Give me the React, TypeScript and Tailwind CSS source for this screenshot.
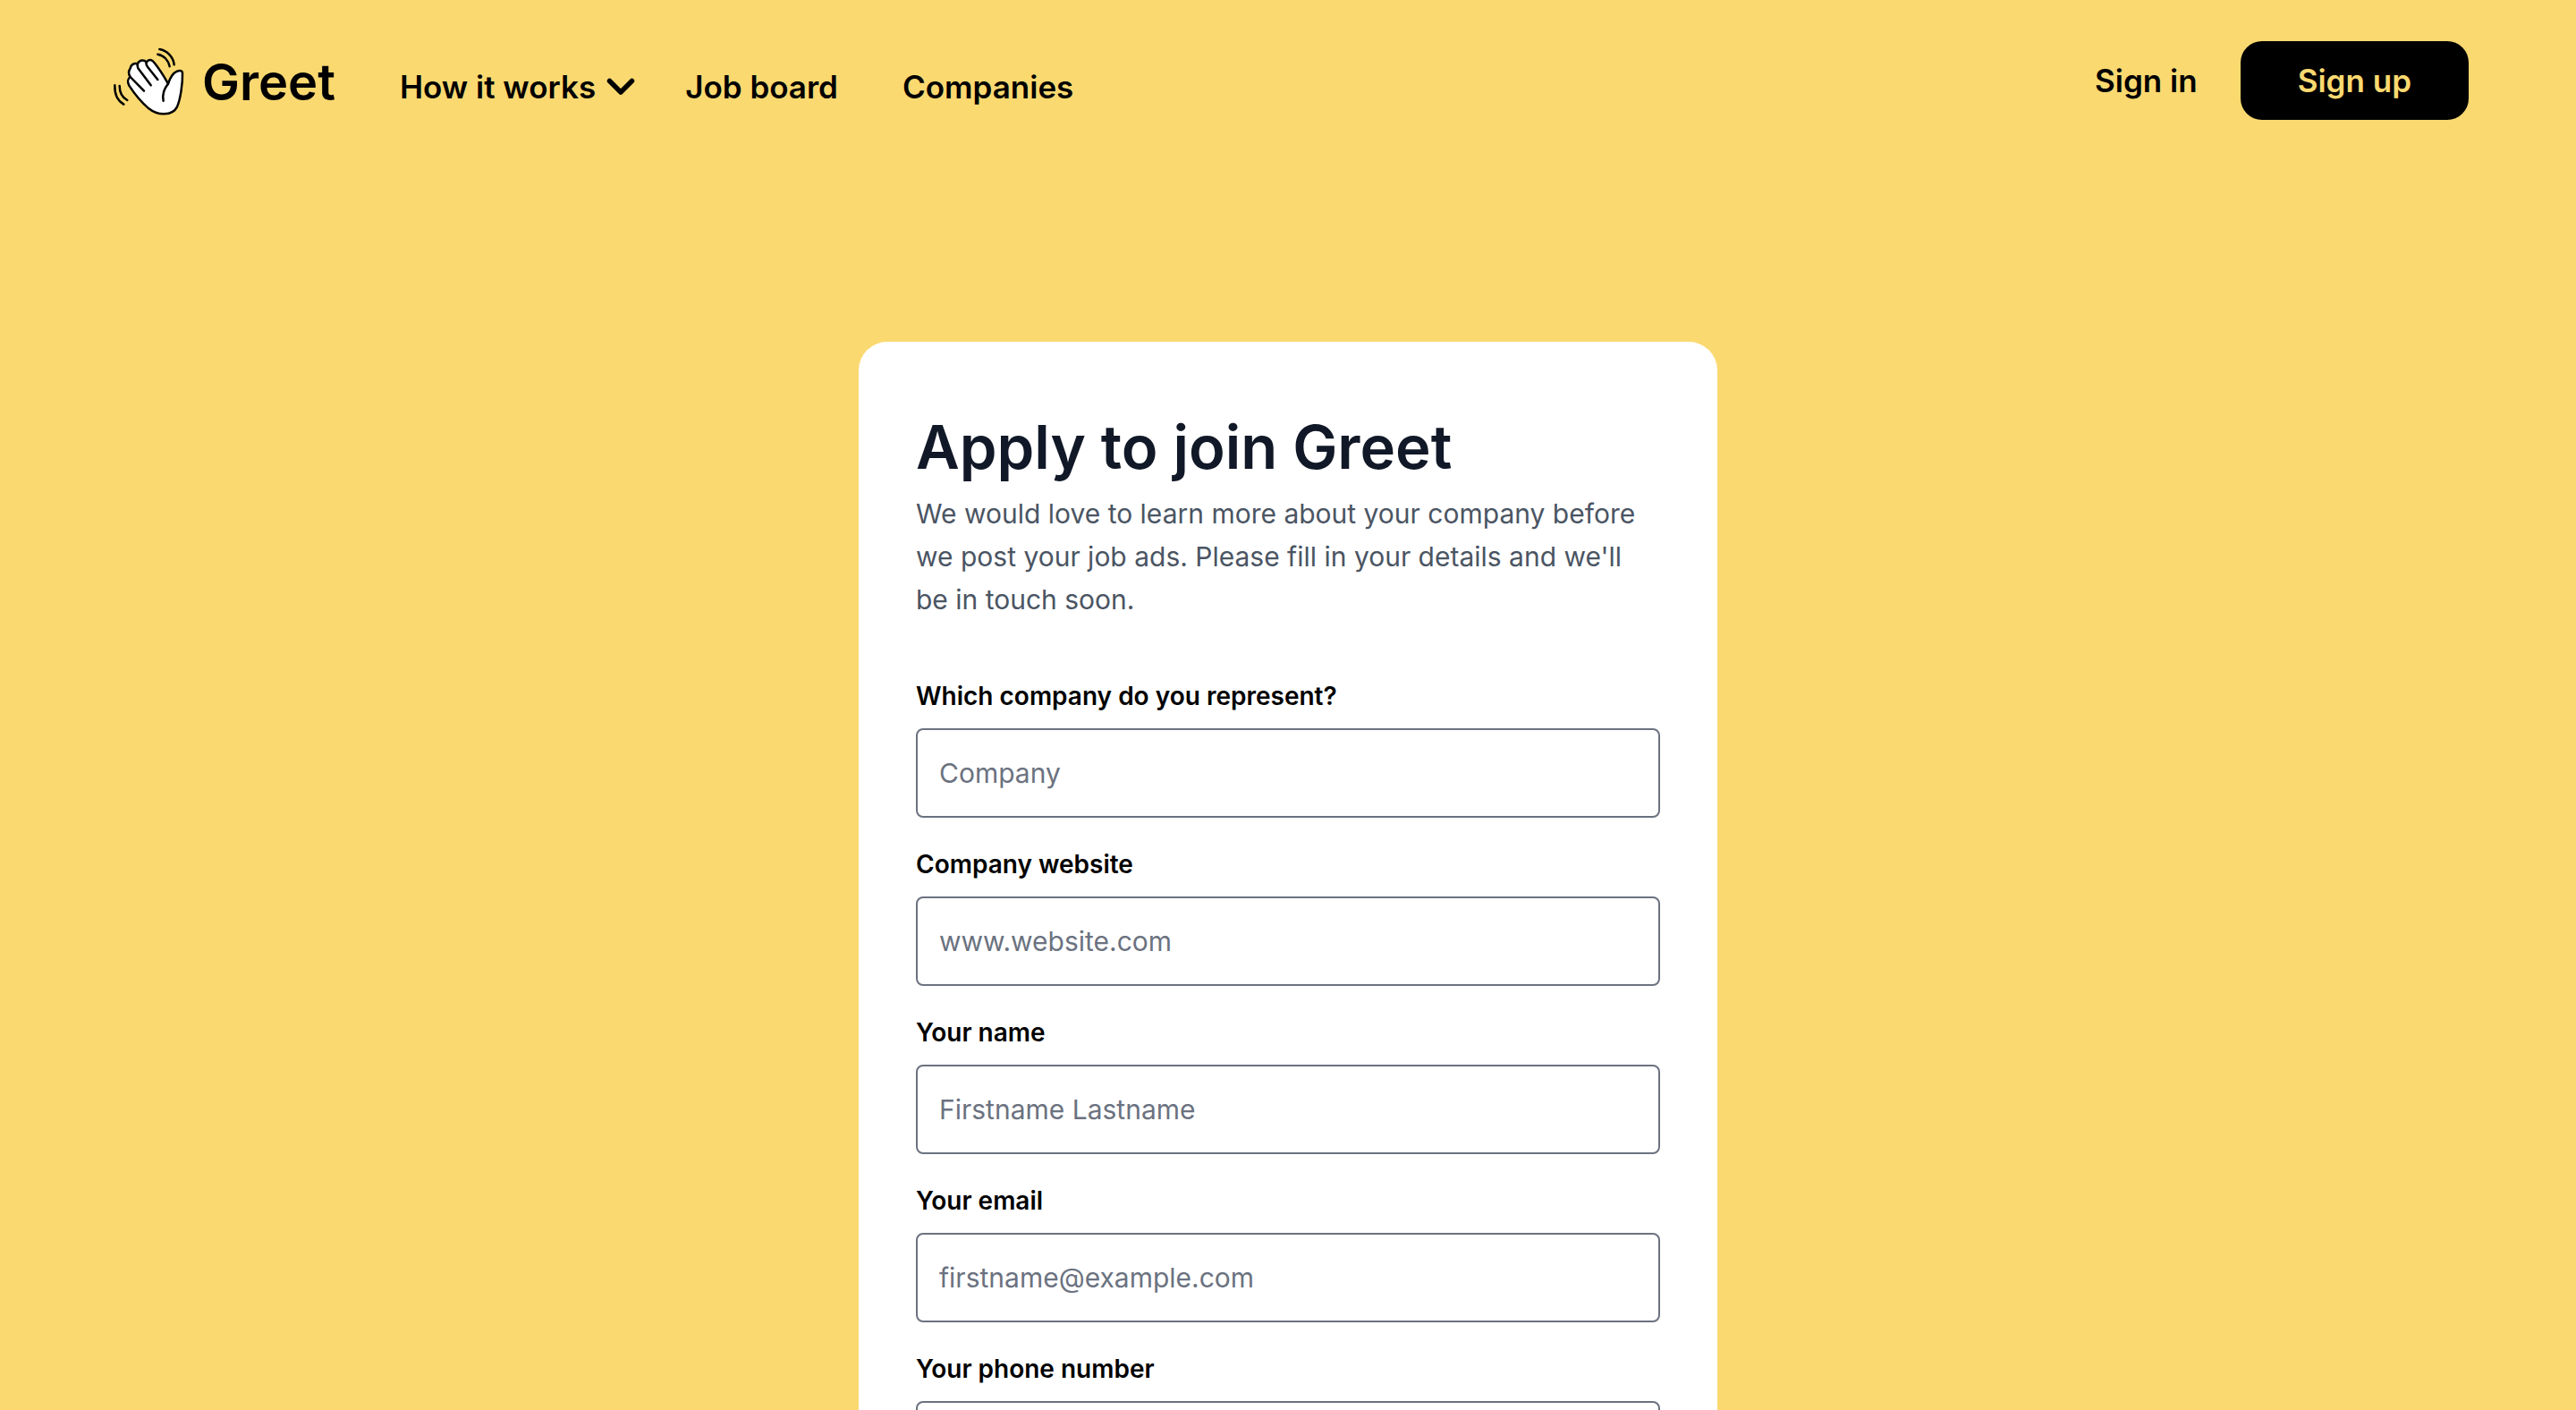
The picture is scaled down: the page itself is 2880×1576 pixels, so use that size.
const fields = [
  { id: 'company', label: 'Which company do you represent?', placeholder: 'Company', type: 'text' },
  { id: 'website', label: 'Company website', placeholder: 'www.website.com', type: 'text' },
  { id: 'name', label: 'Your name', placeholder: 'Firstname Lastname', type: 'text' },
  { id: 'email', label: 'Your email', placeholder: 'firstname@example.com', type: 'email' },
  { id: 'phone', label: 'Your phone number', placeholder: '', type: 'tel' },
];

function WavingHand() {
  return (
    <svg
      viewBox="48 39 240 231"
      className="h-[77px] w-20 shrink-0"
      fill="none"
      stroke="#000"
      strokeWidth="7.5"
      strokeLinecap="round"
      strokeLinejoin="round"
      aria-hidden="true"
    >
      <path
        fill="#fff"
        d="M107 138C98 144 97 156 103 167C120 193 144 223 169 244C184 256 204 263 222 262C242 261 257 252 264 238C275 214 283 160 282 126C282 116 273 115 264 119C250 125 240 142 234 161C221 138 205 112 188 91C181 80 169 77 162 88C152 79 138 80 131 94C118 91 108 98 107 109C101 118 101 130 107 138Z"
      />
      <path d="M107 138L153 185" />
      <path d="M131 94C130 102 132 108 137 114L176 166" />
      <path d="M160 90C160 96 162 100 165 104L199 147" />
      <path d="M234 161C224 173 213 193 218 218" />
      <path d="M205 45C231 49 252 72 254 97" />
      <path d="M199 62C219 65 235 82 239 103" />
      <path d="M55 166C54 194 65 218 85 230" />
      <path d="M71 168C71 190 80 207 97 216" />
    </svg>
  );
}

export default function App() {
  return (
    <div className="min-h-screen bg-[#fad970] font-['Inter','Liberation_Sans',sans-serif] text-black">
      <header className="flex items-start justify-between px-[120px] pt-[46px]">
        <div className="flex items-start">
          <a href="#home" className="flex items-center gap-5 pl-1.5 pt-[7px]">
            <WavingHand />
            <span className="text-[56px] leading-[76px] font-semibold">Greet</span>
          </a>
          <nav className="ml-[72px] flex items-center pt-[23px] text-[35px] leading-[56px] font-semibold">
            <button type="button" className="flex items-center gap-3">
              How it works
              <svg viewBox="0 0 32 20" className="h-5 w-8" fill="none" stroke="#000" strokeWidth="5.5" strokeLinecap="round" strokeLinejoin="round" aria-hidden="true">
                <path d="M3.500 3.500L16 16L28.500 3.500" />
              </svg>
            </button>
            <a href="#jobs" className="ml-14">Job board</a>
            <a href="#companies" className="ml-[72px]">Companies</a>
          </nav>
        </div>
        <div className="flex items-center gap-12 text-[35px] leading-[56px] font-semibold">
          <a href="#signin">Sign in</a>
          <button type="button" className="rounded-3xl bg-black px-16 py-4 text-[#fad970]">Sign up</button>
        </div>
      </header>

      <main className="flex justify-center pt-[248px]">
        <form className="w-full max-w-[960px] rounded-[32px] bg-white px-16 py-20">
          <h1 className="text-[67px] leading-[76px] font-semibold text-[#111827]">Apply to join Greet</h1>
          <p className="mt-3 text-[30px] leading-[48px] text-[#4b5563]">
            We would love to learn more about your company before we post your job ads. Please fill in your details and we'll be in touch soon.
          </p>
          <div className="mt-16 flex flex-col gap-8">
            {fields.map((f) => (
              <div key={f.id} className="flex flex-col gap-4">
                <label htmlFor={f.id} className="text-[28px] leading-10 font-semibold">{f.label}</label>
                <input
                  id={f.id}
                  type={f.type}
                  placeholder={f.placeholder}
                  className="h-[100px] w-full rounded-lg border-2 border-[#6b7280] bg-white px-6 text-[30px] leading-[48px] placeholder:text-[#6b7280]"
                />
              </div>
            ))}
          </div>
        </form>
      </main>
    </div>
  );
}
